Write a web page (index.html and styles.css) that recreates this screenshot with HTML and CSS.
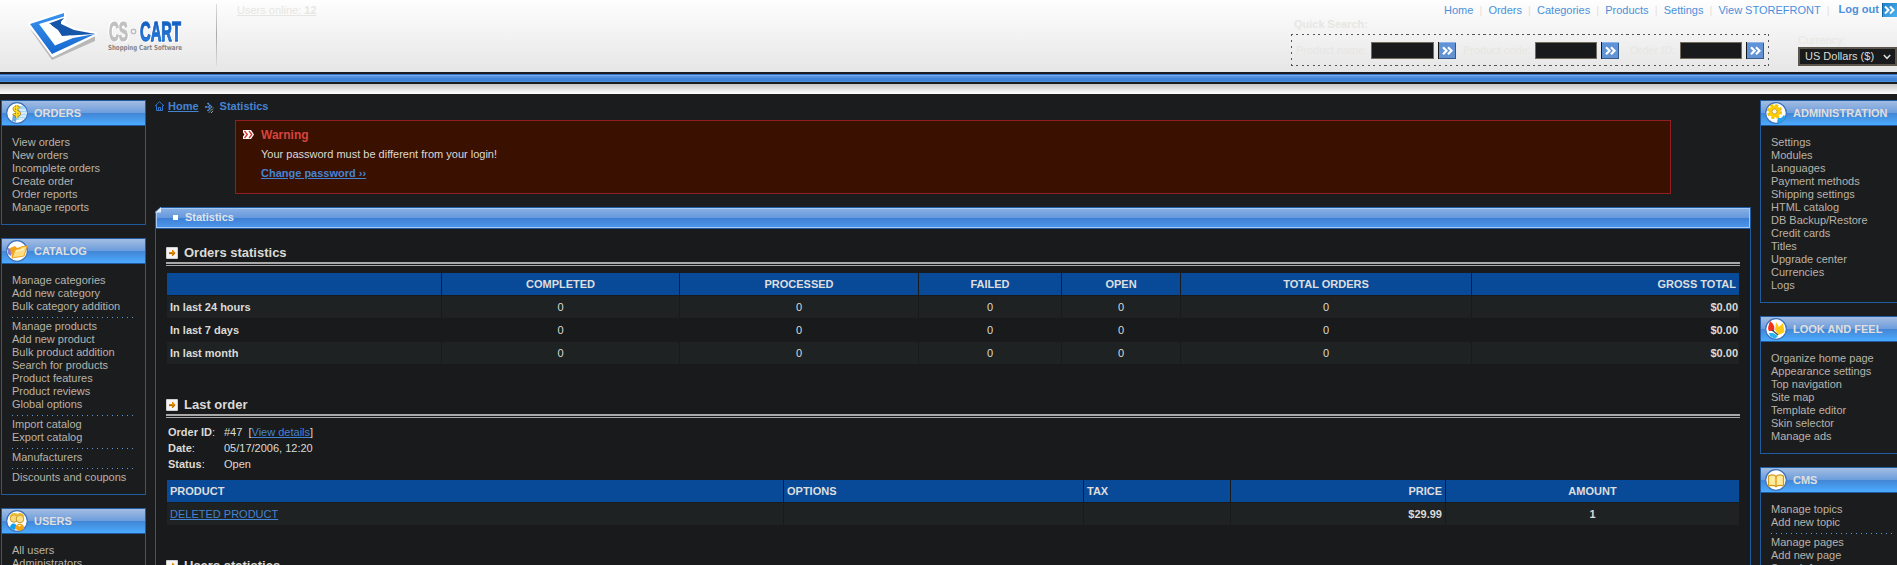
FILE: index.html
```html
<!DOCTYPE html>
<html lang="en">
<head>
<meta charset="utf-8">
<title>CS-Cart - Statistics</title>
<link rel="stylesheet" href="styles.css">
</head>
<body>
<svg class="defs" width="0" height="0">
  <defs>
    <linearGradient id="btnFill" x1="0" y1="0" x2="0" y2="1"><stop offset="0" stop-color="#5f93d8"/><stop offset="1" stop-color="#6493d2"/></linearGradient>
    <linearGradient id="outFill" x1="0" y1="0" x2="1" y2="1"><stop offset="0" stop-color="#1b7fc9"/><stop offset="1" stop-color="#4fb2ee"/></linearGradient>
    <linearGradient id="mark" x1="0" y1="0" x2="0" y2="1"><stop offset="0" stop-color="#3a93ee"/><stop offset="1" stop-color="#1668d0"/></linearGradient>
    <linearGradient id="wordBlue" x1="0" y1="0" x2="0" y2="1"><stop offset="0" stop-color="#0d4fb0"/><stop offset="1" stop-color="#2f8df0"/></linearGradient>
    <symbol id="go" viewBox="0 0 18 17">
      <rect width="18" height="17" fill="url(#btnFill)"/><path d="M.5 0v17" stroke="#16181a"/><path d="M1 .5h17" stroke="#8db4e8"/><path d="M17.500 1v16M1 16.500h17" stroke="#33598c"/>
      <path d="M5 5.300l3.500 3.500L5 12.300M10 5.300l3.500 3.500L10 12.300" fill="none" stroke="#fff" stroke-width="2.200"/>
    </symbol>
    <symbol id="arrow" viewBox="0 0 12 12">
      <rect width="12" height="12" rx="1" fill="#d0d0d0"/><rect x="1" y="1" width="10" height="10" fill="#f4f4f4"/>
      <path d="M3 5h3V3h1l2.500 3L7 9H6V7H3z" fill="#e88a00"/><path d="M3 6.600h3.500M6.500 8.500L9 6" stroke="#a85c00" stroke-width=".9"/>
    </symbol>
    <symbol id="disc" viewBox="0 0 22 22"><circle cx="11" cy="11" r="10.300" fill="#fff" stroke="#3d74bd" stroke-width="1.200"/></symbol>
  </defs>
</svg>

<header class="top">
  <svg class="logo" width="190" height="72" viewBox="0 0 190 72">
    <path d="M30 29L52 60L95 41V36L52 52z" fill="#b8b8b8"/>
    <path d="M30 24L64 13V19L62 24L74 30L95 34L53 55z" fill="#fff" stroke="#fff" stroke-width="4" stroke-linejoin="round"/>
    <path d="M30 24L64 13V18L61 21V24L73 30L95 34L52 54z" fill="url(#mark)"/>
    <path d="M64 16.500L39 24L55 45.500L73 38L95 34L73 29L61 24V21L64 18z" fill="#fff"/>
    <path d="M49 23.500L64 18L61 21.500V24L74 30L95 34L62 36L58 30z" fill="#1555aa"/>
    <path d="M45 25L50 23.500L61 36.500L72 35.500L57.500 42z" fill="#fff"/>
    <g class="wordmark" font-family="Liberation Sans, Arial, sans-serif" font-weight="bold" font-size="28" stroke-linejoin="round">
      <text x="109" y="41" textLength="19" lengthAdjust="spacingAndGlyphs" fill="#c0c0c0" stroke="#c0c0c0" stroke-width="1.100">CS</text>
      <text x="140" y="41" textLength="41" lengthAdjust="spacingAndGlyphs" fill="url(#wordBlue)" stroke="#1b68c8" stroke-width="1.300">CART</text>
    </g>
    <rect x="131.500" y="29.500" width="4" height="4" rx="1" fill="#fff" stroke="#bdbdbd" stroke-width="1.500"/>
    <text x="108" y="50" font-size="7" font-weight="bold" font-family="DejaVu Sans, sans-serif" textLength="74" lengthAdjust="spacingAndGlyphs" fill="#858585">Shopping Cart Software</text>
  </svg>
  <i class="divider"></i>
  <a class="online">Users online: <b>12</b></a>
  <div class="tools">
    <nav class="nav"><span><a>Home</a>&nbsp; <i>|</i> &nbsp;<a>Orders</a>&nbsp; <i>|</i> &nbsp;<a>Categories</a>&nbsp; <i>|</i> &nbsp;<a>Products</a>&nbsp; <i>|</i> &nbsp;<a>Settings</a>&nbsp; <i>|</i> &nbsp;<a>View STOREFRONT</a>&nbsp; <i>|</i></span>
      <a class="logout">Log out</a>
      <svg width="15" height="14" viewBox="0 0 15 14"><rect width="15" height="14" fill="url(#outFill)"/><path d="M.5 0v14" stroke="#1566a8"/><path d="M3 3.500L6.500 7L3 10.500M8 3.500L11.500 7L8 10.500" fill="none" stroke="#fff" stroke-width="2"/></svg>
    </nav>
    <div class="search-row">
      <div class="search">
        <b class="quick">Quick Search:</b>
        <div class="fields">
          <label class="f1">Product name:</label><input class="i1"><svg class="go"><use href="#go"/></svg>
          <label class="f2">Product code:</label><input><svg class="go"><use href="#go"/></svg>
          <label class="f3">Order ID:</label><input><svg class="go"><use href="#go"/></svg>
        </div>
      </div>
      <div class="currency">
        <label>Currency:</label>
        <div class="select">US Dollars ($)<svg width="8" height="6" viewBox="0 0 8 6"><path d="M.8 1L4 4.300L7.200 1" fill="none" stroke="#ddd" stroke-width="1.500"/></svg></div>
      </div>
    </div>
  </div>
</header>
<div class="blue-band"></div>
<div class="gray-band"></div>

<div class="columns">
  <aside class="side">
    <section class="box">
      <h2><svg class="ico" viewBox="0 0 22 22"><use href="#disc"/><path d="M11 4h6.500a9 9 0 0 1 0 14H9z" fill="#a9d6f5"/><path d="M13 8h7M13 11h8M13 14h7M13 17h5" stroke="#fff"/><path d="M6 19l1-7 4 1-1 7z" fill="#6aa9dc"/><path d="M13.500 6.500C12 4.500 8 5 8 7.200S13.800 9 13.500 11.500 8.500 13.500 7.500 11.500M10.800 3v13" fill="none" stroke="#a87800" stroke-width="2.800"/><path d="M13.500 6.500C12 4.500 8 5 8 7.200S13.800 9 13.500 11.500 8.500 13.500 7.500 11.500M10.800 3v13" fill="none" stroke="#ffe02e" stroke-width="1.500"/></svg>ORDERS</h2>
      <ul><li>View orders</li><li>New orders</li><li>Incomplete orders</li><li>Create order</li><li>Order reports</li><li>Manage reports</li></ul>
    </section>
    <section class="box">
      <h2><svg class="ico" viewBox="0 0 22 22"><use href="#disc"/><path d="M2 8l3 1v7l-3-2z" fill="#8a7fd0"/><path d="M4 8l5-2 2 2 6-2v3l-8 2-3 7z" fill="#f0a41c"/><path d="M6 18l3-8 5-1 1-2 6-1-3 10z" fill="#ffdf85" stroke="#f5a31d"/><path d="M10 11l8-2" stroke="#fff3c2" stroke-width="1.500"/></svg>CATALOG</h2>
      <ul><li>Manage categories</li><li>Add new category</li><li>Bulk category addition</li><li class="dots"></li><li>Manage products</li><li>Add new product</li><li>Bulk product addition</li><li>Search for products</li><li>Product features</li><li>Product reviews</li><li>Global options</li><li class="dots"></li><li>Import catalog</li><li>Export catalog</li><li class="dots"></li><li>Manufacturers</li><li class="dots"></li><li>Discounts and coupons</li></ul>
    </section>
    <section class="box">
      <h2><svg class="ico" viewBox="0 0 22 22"><use href="#disc"/><path d="M4 18c0-6 7-6 7 0l-3 2z" fill="#12a0f0"/><path d="M9 19c0-7 10-7 9 0l-4 2z" fill="#f2a30f"/><circle cx="8" cy="8.500" r="3.800" fill="#f8d87a" stroke="#b98513" stroke-width=".8"/><circle cx="14" cy="9" r="3.800" fill="#fbe08a" stroke="#b98513" stroke-width=".8"/><path d="M4.500 7c1-4 6-4 7-1M10.500 7c1-4 6-4 7 0" fill="none" stroke="#e8ba32" stroke-width="1.800"/><path d="M12 15l1.500 2 1.500-2" fill="#fff"/></svg>USERS</h2>
      <ul><li>All users</li><li>Administrators</li></ul>
    </section>
  </aside>

  <main class="main">
    <div class="crumbs">
      <svg width="9" height="10" viewBox="0 0 9 10"><path d="M0 5L4.500.7 9 5M1.500 4.500v5h6v-5M3.500 9.500v-3h2v3" fill="none" stroke="#2e75cc"/></svg>
      <a>Home</a>
      <svg class="sep" width="9" height="11" viewBox="0 0 9 11"><path d="M0 5h5M2.500 1l4 4-4 4" fill="none" stroke="#5593dc" stroke-width="1.600" stroke-dasharray="2 .4"/><path d="M4 10.500l4.500-4.500M6 11l2.500-2.500" stroke="#d8d8d8" stroke-width=".9" stroke-dasharray="1.200 .6"/></svg>
      <span>Statistics</span>
    </div>
    <div class="warning">
      <svg width="12" height="9" viewBox="0 0 12 9"><path d="M0 0h8l3 4.500L8 9H0V6.500l1.500-2L0 2.500z" fill="#fff"/><path d="M1.500 1l2.800 3.500L1.500 8M6 1l2.800 3.500L6 8" fill="none" stroke="#d9302c" stroke-width="1.300"/></svg>
      <div>
        <h3>Warning</h3>
        <p>Your password must be different from your login!</p>
        <p><a>Change password ››</a></p>
      </div>
    </div>
    <section class="panel">
      <h2><svg class="fold" width="7" height="7" viewBox="0 0 7 7"><path d="M0 0h6L0 6z" fill="#1b1c1d"/><path d="M6 0v5.500H0z" fill="#e6eefa"/><path d="M0 5.500L6 0" stroke="#6ea3e4"/></svg>Statistics</h2>
      <div class="body">
        <h3><svg><use href="#arrow"/></svg>Orders statistics</h3>
        <div class="grid stats">
          <b class="th"></b><b class="th">COMPLETED</b><b class="th">PROCESSED</b><b class="th">FAILED</b><b class="th">OPEN</b><b class="th">TOTAL ORDERS</b><b class="th end">GROSS TOTAL</b>
          <b class="start odd">In last 24 hours</b><span class="odd">0</span><span class="odd">0</span><span class="odd">0</span><span class="odd">0</span><span class="odd">0</span><b class="sum odd">$0.00</b>
          <b class="start">In last 7 days</b><span>0</span><span>0</span><span>0</span><span>0</span><span>0</span><b class="sum">$0.00</b>
          <b class="start odd">In last month</b><span class="odd">0</span><span class="odd">0</span><span class="odd">0</span><span class="odd">0</span><span class="odd">0</span><b class="sum odd">$0.00</b>
        </div>
        <h3 class="next"><svg><use href="#arrow"/></svg>Last order</h3>
        <dl>
          <dt><b>Order ID</b>:</dt><dd>#47&nbsp; [<a>View details</a>]</dd>
          <dt><b>Date</b>:</dt><dd>05/17/2006, 12:20</dd>
          <dt><b>Status</b>:</dt><dd>Open</dd>
        </dl>
        <div class="grid items">
          <b class="th start">PRODUCT</b><b class="th start">OPTIONS</b><b class="th start">TAX</b><b class="th end">PRICE</b><b class="th">AMOUNT</b>
          <span class="start odd"><a>DELETED PRODUCT</a></span><span class="odd"></span><span class="odd"></span><b class="end odd">$29.99</b><b class="odd">1</b>
        </div>
        <h3 class="next"><svg><use href="#arrow"/></svg>Users statistics</h3>
      </div>
    </section>
  </main>

  <aside class="side">
    <section class="box">
      <h2><svg class="ico" viewBox="0 0 22 22"><use href="#disc"/><circle cx="9.500" cy="9.500" r="6.300" fill="none" stroke="#f0c20b" stroke-width="2.600" stroke-dasharray="2.900 2.050"/><circle cx="9.500" cy="9.500" r="4.200" fill="#e8e8e8" stroke="#fc0" stroke-width="3.400"/><circle cx="9.500" cy="9.500" r="2.500" fill="#f4f4f4" stroke="#c79500" stroke-width=".8"/><path d="M12 20l1-4h3l3-3 1.500 2-2.500 4-4 2z" fill="#28a4ee"/></svg>ADMINISTRATION</h2>
      <ul><li>Settings</li><li>Modules</li><li>Languages</li><li>Payment methods</li><li>Shipping settings</li><li>HTML catalog</li><li>DB Backup/Restore</li><li>Credit cards</li><li>Titles</li><li>Upgrade center</li><li>Currencies</li><li>Logs</li></ul>
    </section>
    <section class="box">
      <h2><svg class="ico" viewBox="0 0 22 22"><use href="#disc"/><path d="M5 3c4 3 5 6 4 10H4c-2-3 0-6 1-10z" fill="#f5301a"/><path d="M10 12l1-8 3 5 4-4 1.500 9-6 3z" fill="#ffc914"/><path d="M4 15h4l5 3-3 3-5-3z" fill="#2ab2f2"/><path d="M7 12l6 5" stroke="#445" stroke-width="1.200"/></svg>LOOK AND FEEL</h2>
      <ul><li>Organize home page</li><li>Appearance settings</li><li>Top navigation</li><li>Site map</li><li>Template editor</li><li>Skin selector</li><li>Manage ads</li></ul>
    </section>
    <section class="box">
      <h2><svg class="ico" viewBox="0 0 22 22"><use href="#disc"/><path d="M3.500 7c3-1.500 6-1 7.500.5 1.500-1.500 4.500-2 7.500-.5v10c-3-1-6-.5-7.500.7-1.500-1.200-4.500-1.700-7.500-.7z" fill="#ffeb9c" stroke="#d59a1c" stroke-width="1.300"/><path d="M11 7.500v10" stroke="#d59a1c" stroke-width="1.300"/></svg>CMS</h2>
      <ul><li>Manage topics</li><li>Add new topic</li><li class="dots"></li><li>Manage pages</li><li>Add new page</li><li>Search for pages</li></ul>
    </section>
  </aside>
</div>
</body>
</html>
```
FILE: styles.css
```css
* { box-sizing: border-box; }
body {
  margin: 0; height: 565px; overflow: hidden;
  background: #1b1c1d; color: #dcdad6;
  font: 11px/13px "Liberation Sans", Arial, sans-serif;
}
h2, h3, p, ul, dl, dd { margin: 0; padding: 0; }
ul { list-style: none; }
svg { display: block; flex: none; }
.defs { position: absolute; }
a { color: #4584d2; text-decoration: underline; }

.top { display: flex; height: 72px; background: linear-gradient(#fefefe, #e6e6e6); }
.logo { margin-right: 26px; }
.wordmark { filter: drop-shadow(1px 1px 0 #fff) drop-shadow(-1px -1px 0 #fff); }
.divider { width: 1px; height: 62px; margin-top: 4px; background: linear-gradient(#ddd, #aaa 50%, #ddd); }
.online { margin: 4px 0 0 20px; height: 14px; color: #e8e6e3; }
.tools { margin-left: auto; width: 606px; }
.nav { display: flex; height: 20px; padding: 3px 0 0 153px; white-space: nowrap; }
.nav span { padding-top: 1px; letter-spacing: -.008px; }
.nav a { color: #4a90dc; text-decoration: none; }
.nav i { font-style: normal; color: #e9dfda; }
.nav .logout { margin-left: 9px; font-weight: bold; }
.nav svg { margin-left: auto; }
.search-row { display: flex; }
.quick { display: block; height: 14px; margin-left: 3px; line-height: 9px; color: #e8e6e3; }
.fields {
  display: flex; width: 478px; height: 32px; padding: 8px 0 0 5px;
  background:
    repeating-linear-gradient(90deg, #555 0 2px, transparent 2px 5.500px) 0 0 / 100% 1px no-repeat,
    repeating-linear-gradient(90deg, #555 0 2px, transparent 2px 5.500px) 0 100% / 100% 1px no-repeat,
    repeating-linear-gradient(#555 0 2px, transparent 2px 6px) 0 0 / 1px 100% no-repeat,
    repeating-linear-gradient(#555 0 2px, transparent 2px 6px) 100% 0 / 1px 100% no-repeat;
}
.fields label, .currency label { color: #e8e6e3; line-height: 17px; white-space: nowrap; }
.f1 { width: 75px; }
.f2 { width: 72px; margin-left: 7px; }
.f3 { width: 50px; margin-left: 11px; }
.fields input { width: 62px; height: 17px; padding: 0; background: #181a1b; border: 1px solid #736b5e; }
.fields .i1 { width: 63px; }
.go { width: 18px; height: 17px; margin-left: 4px; }
.currency { width: 99px; margin-left: 29px; padding-top: 12px; }
.currency label { display: block; height: 15px; }
.select {
  display: flex; align-items: center; justify-content: space-between;
  height: 19px; padding: 0 4px 0 5px; background: #181a1b; border: 2px solid #5c554b; color: #dcdad6;
}
.blue-band {
  height: 12px; border: solid #1b1c1d; border-width: 2px 0;
  background: linear-gradient(#2f6ec2 0 1px, #78aeee 1px 2px, #5590dc 2px 4px, #4083d6 4px 7px, #4a90e0 7px);
}
.gray-band { height: 10px; background: linear-gradient(#c6c6c6, #fff); }

.columns { display: flex; gap: 9px; padding: 6px 0 0 1px; width: 1905px; }
.side { flex: none; width: 145px; }
.box { border: 1px solid #205a9f; margin-bottom: 13px; }
.box h2 {
  display: flex; align-items: center; gap: 6px; height: 25px; padding-left: 4px;
  border-bottom: 1px solid #205a9f; font-size: 11px; line-height: 13px; white-space: nowrap; color: #e0dfdc;
  background: linear-gradient(#a3bde2, #6c9ddc 49%, #4285d4 50%, #4cabff);
}
.ico { width: 22px; height: 22px; }
.box ul { padding: 10px; color: #b8b3aa; }
.dots { height: 7px; margin-right: 1px; background: repeating-linear-gradient(90deg, #5f9ade 0 1px, transparent 1px 5px) 0 4px / 100% 1px no-repeat; }

.main { flex: none; width: 1596px; }
.crumbs { display: flex; height: 20px; font-weight: bold; color: #4584d2; }
.crumbs svg { margin: 1px 4px 0 0; }
.crumbs .sep { margin: 2px 6px 0; }
.warning {
  display: flex; gap: 6px; width: 1436px; height: 74px; margin-left: 80px; padding: 7px;
  background: #3a1000; border: 1px solid #8f1f20;
}
.warning svg { margin-top: 2px; }
.warning h3 { font-size: 12px; line-height: 14px; color: #d5443f; }
.warning p { margin-top: 6px; line-height: 13px; }
.warning a { font-weight: bold; }
.panel { margin-top: 13px; border: 1px solid #205a9f; height: 400px; background: #191a1b; }
.panel h2 {
  position: relative; height: 20px; padding-left: 28px; line-height: 17px; font-size: 11px; color: #dfe4ec;
  border: 1px solid #a6c8f4;
  background: linear-gradient(#fff, #fff) 16px 6px / 5px 5px no-repeat, linear-gradient(#86aee4, #6498dc 50%, #3d80d6 51%, #4c96ea);
  box-shadow: 0 1px #205a9f;
}
.fold { position: absolute; left: -2px; top: -2px; }
.body { padding: 19px 10px 0; }
.body h3 {
  display: flex; gap: 6px; height: 19px; font-size: 13px; line-height: 12px;
  background: linear-gradient(#a9a9a9 0 2px, transparent 2px 3px, #a9a9a9 3px) 0 15px / 100% 4px no-repeat;
}
.body h3 svg { width: 12px; height: 12px; }
.grid { display: grid; gap: 1px; margin: 7px 1px 0; }
.grid > * { height: 22px; line-height: 22px; padding: 0 3px; text-align: center; }
.stats { grid-template-columns: 274px 237px 238px 142px 118px 290px 1fr; }
.items { grid-template-columns: 616px 299px 146px 214px 1fr; margin-top: 8px; }
.grid .th { background: #094a98; color: #dedede; }
.grid .odd { background: #1e2222; }
.grid .start { text-align: left; }
.grid .end { text-align: right; }
.grid .sum { text-align: right; padding-right: 1px; }
.body .next { margin-top: 35px; }
dl { display: grid; grid-template-columns: 56px auto; margin: 6px 0 0 2px; line-height: 16px; }
```
